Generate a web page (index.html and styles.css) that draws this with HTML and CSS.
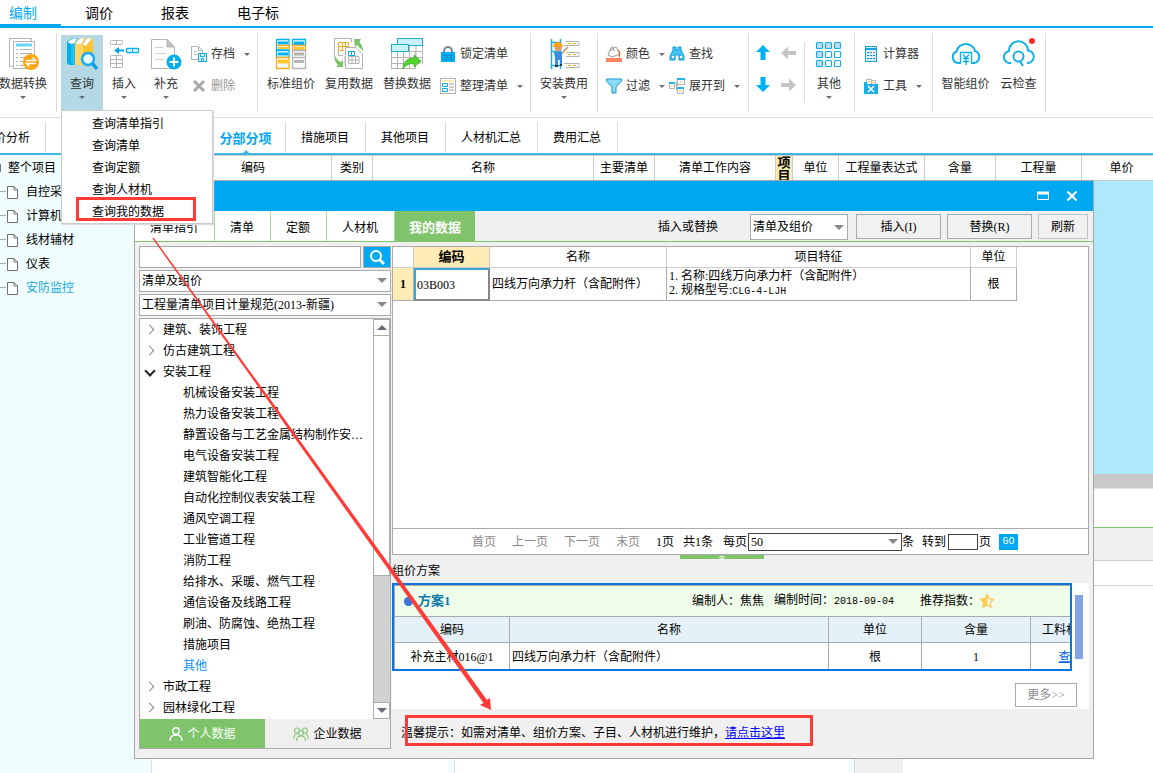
FILE: index.html
```html
<!DOCTYPE html>
<html lang="zh-CN">
<head>
<meta charset="utf-8">
<title>编制</title>
<link rel="stylesheet" href="styles.css">
</head>
<body>
<div class="app">
  <nav class="menubar">
    <a class="menubar-tab is-active" href="#">编制</a>
    <a class="menubar-tab" href="#">调价</a>
    <a class="menubar-tab" href="#">报表</a>
    <a class="menubar-tab" href="#">电子标</a>
  </nav>

  <header class="ribbon">
    <div class="group group-convert">
      <button class="tool tool-convert" type="button">
        <svg class="icon" viewBox="0 0 32 32"><path d="M2.500 28.500V.5H24.500V4" fill="none" stroke="#b4b4b4"/><path d="M2.500 28.500H6" stroke="#b4b4b4"/><rect x="6.500" y="3.500" width="21" height="27" fill="#fff" stroke="#b4b4b4"/><path d="M9 7H25" stroke="#6dd3f7" stroke-width="3"/><path d="M9 11.500H11M13 11.500H25M9 15.500H11M13 15.500H25M9 19.500H11M13 19.500H18M9 23.500H11M13 23.500H17M9 27.500H11M13 27.500H18" stroke="#b4b4b4"/><circle cx="24" cy="24" r="8" fill="#fba512"/><path d="M19 22.500H28.500L25.500 19.500M29 25.500H19.500L22.500 28.500" fill="none" stroke="#fff" stroke-width="1.500"/></svg>
        <span class="label">数据转换</span><i class="caret"></i>
      </button>
    </div>
    <div class="group group-edit">
      <button class="tool tool-narrow is-open" type="button">
        <svg class="icon" viewBox="0 0 32 32"><path d="M1 4L5 1V24L8 27H3L1 25Z" fill="#00b1ef"/><path d="M5 6H9V27H7L5 24Z" fill="#25bdf0"/><path d="M1 4L7 0H12L8 6H4Z" fill="#fff" stroke="#00a9e8" stroke-width=".7"/><path d="M9 7L17 4V27H9Z" fill="#fdd667"/><path d="M9 6L14 0H19L15 7Z" fill="#fff" stroke="#f7b62b" stroke-width=".7"/><path d="M17 7L27 1V26L17 28Z" fill="#fcc62f"/><path d="M16 7L21 0H27L20 8Z" fill="#fff" stroke="#f7b62b" stroke-width=".7"/><circle cx="22" cy="21" r="6" fill="#e8f8fe" stroke="#18adf0" stroke-width="2.500"/><path d="M26.500 25.500L31 31" stroke="#0f9ee4" stroke-width="3.500"/></svg>
        <span class="label">查询</span><i class="caret"></i>
      </button>
      <button class="tool tool-narrow" type="button">
        <svg class="icon" viewBox="0 0 32 32"><g fill="none" stroke="#b4b4b4"><rect x="2.500" y="2.500" width="12" height="4" rx="1"/><path d="M8.500 2.500V6.500"/><rect x="2.500" y="17.500" width="12" height="12" rx="1"/><path d="M8.500 17.500V29.500M2.500 21.500H14.500M2.500 25.500H14.500"/></g><rect x="18.500" y="10.500" width="12" height="4" rx="1" fill="none" stroke="#00b1ef" stroke-width="1.400"/><path d="M24.500 10V15" stroke="#00b1ef"/><path d="M6 12.500L11 9V11.500H16V13.500H11V16Z" fill="#00a8e8"/></svg>
        <span class="label">插入</span><i class="caret"></i>
      </button>
      <button class="tool tool-narrow" type="button">
        <svg class="icon" viewBox="0 0 32 32"><path d="M1.500 1.500H17L24.500 9V30.500H1.500Z" fill="#fff" stroke="#b4b4b4"/><path d="M17 1.500V9H24.500Z" fill="#c4c4c4" stroke="#b4b4b4"/><path d="M5 9.500H13M5 15.500H16M5 21.500H14" stroke="#d0d0d0"/><circle cx="24" cy="24" r="7.500" fill="#00aef0"/><path d="M24 19.500V28.500M19.500 24H28.500" stroke="#fff" stroke-width="2"/></svg>
        <span class="label">补充</span><i class="caret"></i>
      </button>
      <div class="stack">
        <button class="row" type="button"><svg class="mini" viewBox="0 0 16 16"><path d="M7 13.500H.5V.5H7.500L11.500 4.500V7" fill="#fff" stroke="#b4b4b4"/><path d="M7.500 .5V4.500H11.500M3 5.500H6M3 8.500H6" fill="none" stroke="#b4b4b4"/><rect x="7.500" y="7.500" width="8" height="8" fill="#dff5fc" stroke="#16aede"/><path d="M9.500 7.500V10.500H13.500V7.500M10.500 15.500V12.500H12.500V15.500" fill="none" stroke="#16aede"/></svg><span>存档</span><i class="caret"></i></button>
        <button class="row is-disabled" type="button"><svg class="mini" viewBox="0 0 16 16"><path d="M3 3L13 13M13 3L3 13" stroke="#a8a8a8" stroke-width="3"/></svg><span>删除</span></button>
      </div>
    </div>
    <div class="group group-list">
      <button class="tool" type="button">
        <svg class="icon" viewBox="0 0 32 32"><g fill="#fff" stroke-width="1.300"><path d="M1.500 12V1.500H14V12Z" stroke="#00b1ef"/><path d="M3 5H13" stroke="#00b1ef" stroke-width="3"/><path d="M1.500 7.500H14V12" stroke="#fbab20"/><path d="M3 10H13" stroke="#fcc62f" stroke-width="2"/><path d="M1.500 12.500H14V19.500H1.500Z" stroke="#00b1ef"/><path d="M3 16H13" stroke="#00b1ef" stroke-width="3"/><path d="M1.500 19.500H14V30.500H1.500Z" stroke="#fbab20"/><path d="M3 23.500H13" stroke="#fcc62f" stroke-width="4"/><path d="M17.500 7V1.500H30.500V7Z" stroke="#00b1ef"/><path d="M19 5H29" stroke="#00b1ef" stroke-width="3"/><path d="M17.500 7.500H30.500V12H17.500Z" stroke="#fbab20"/><path d="M19 10H29" stroke="#fcc62f" stroke-width="2"/><path d="M17.500 12.500H30.500V30.500H17.500ZM17.500 19.500H30.500" stroke="#b4b4b4"/><path d="M19 16H29M19 23.500H29" stroke="#b4b4b4" stroke-width="3"/></g></svg>
        <span class="label">标准组价</span>
      </button>
      <button class="tool" type="button">
        <svg class="icon" viewBox="0 0 32 32"><path d="M12 27.500V.5H1.500V17.500M1.500 .5H18.500V4" fill="none" stroke="#b4b4b4"/><rect x="2" y="1" width="16" height="17" fill="#fff"/><path d="M5.500 12.500V17.500H10M5.500 12.500H10" fill="none" stroke="#b4b4b4"/><path d="M5.500 4.500H15.500V9M5.500 4.500V12.500H11M5.500 8.500H15.500M9.500 4.500V12.500M12.500 4.500V9" fill="none" stroke="#fbab20"/><path d="M12.500 9.500H23L29.500 16V30.500H12.500Z" fill="#fff" stroke="#b4b4b4"/><path d="M15.500 13.500H21.500V17.500H15.500ZM18.500 13.500V17.500" fill="none" stroke="#00b1ef"/><path d="M15.500 18.500H26V25.500H15.500ZM15.500 22H26M19 18V25.500M22.500 17V25.500" fill="none" stroke="#b4b4b4"/><path d="M21 1H28L26.500 4C29 7 30 10 30 13L24 7L22 9Z" fill="#7bc268"/><path d="M1.500 17C3 20 5 23 8 24L10 22V29H3L5 27C2 24 1 21 1.500 17Z" fill="#7bc268"/></svg>
        <span class="label">复用数据</span>
      </button>
      <button class="tool" type="button">
        <svg class="icon" viewBox="0 0 32 32"><g fill="#fff" stroke="#b4b4b4"><rect x=".5" y="13.500" width="24" height="17"/><path d="M.5 19.500H31.500M.5 25.500H24M6.500 14V30.500M12.500 14V30.500M18.500 8V30.500M25 8V25H31.500V8M18.500 13.500H31.500"/></g><rect x="6.500" y=".5" width="25" height="7" fill="#c9f0fd" stroke="#1bb1d5"/><rect x=".5" y="6.500" width="17" height="7" fill="#c9f0fd" stroke="#1bb1d5"/><path d="M12 31C12 24 16 20 23 20V17L30 23L23 29V26C18 25 15 27 12 31Z" fill="#51d42e" stroke="#35aa20" stroke-width=".7"/></svg>
        <span class="label">替换数据</span>
      </button>
      <div class="stack">
        <button class="row" type="button"><svg class="mini" viewBox="0 0 16 16"><path d="M4 7V5A4 4 0 0 1 12 5V7" fill="none" stroke="#7b8792" stroke-width="2"/><rect x="1" y="6" width="14" height="10" fill="#00aef3"/><path d="M4 9.500H6M7 9.500H9M10 9.500H12M4 11.500H5M6 11.500H8M10 11.500H12M4 13.500H6M7 13.500H9M10 13.500H12" stroke="#067fba"/></svg><span>锁定清单</span></button>
        <button class="row" type="button"><svg class="mini" viewBox="0 0 16 16"><rect x=".5" y=".5" width="15" height="15" fill="#fff" stroke="#b4b4b4"/><path d="M2 3H14" stroke="#fde9b4" stroke-width="2"/><path d="M2.500 5.500H7.500V8.500H2.500ZM2.500 10.500H7.500V13.500H2.500Z" fill="#fff" stroke="#00b1ef"/><path d="M9 6H14M9 9H14M9 12H14" stroke="#ccc" stroke-width="2"/></svg><span>整理清单</span><i class="caret"></i></button>
      </div>
    </div>
    <div class="group group-install">
      <button class="tool" type="button">
        <svg class="icon" viewBox="0 0 32 32"><path d="M3.500 1V31M12.500 1V31M3 4.500H13M3 13.500H13M3 27.500H13" stroke="#18b1e0" stroke-width="1.500"/><g fill="#fff" stroke="#b4b4b4"><path d="M18 3.500H31V7.500H16M18 14.500H31V18.500H18M16 25.500H31V29.500H18"/></g><path d="M20 5.500H23M25 5.500H28M20 16.500H23M25 16.500H28M20 27.500H23M25 27.500H28" stroke="#fbab20"/><path d="M13 16L20 9" stroke="#c8a68a" stroke-width="2"/><path d="M6 14H14V27H12V22H10V28H7V20Z" fill="#3b8de0"/><circle cx="10" cy="10" r="3.500" fill="#d99f70"/><path d="M5 9A5 5 0 0 1 15 9Z" fill="#fba018"/><path d="M7 28H10M12 27H14" stroke="#333" stroke-width="2"/></svg>
        <span class="label">安装费用</span><i class="caret"></i>
      </button>
    </div>
    <div class="group group-filter">
      <div class="stack">
        <button class="row" type="button"><svg class="mini" viewBox="0 0 16 16"><path d="M4 4L10 1L14 8L6 11L2 9Z" fill="#fff" stroke="#999"/><path d="M5 5Q4 0 7 1L8 5" fill="none" stroke="#999"/><path d="M11 3Q15 4 14 11Q12 12 13 7Z" fill="#d2691e"/><path d="M0 14H16" stroke="#ff8260" stroke-width="4"/></svg><span>颜色</span><i class="caret"></i></button>
        <button class="row" type="button"><svg class="mini" viewBox="0 0 16 16"><path d="M.5 1H15.500V3L10 9V15H6V9L.5 3Z" fill="#8bdcf8" stroke="#159fd4"/></svg><span>过滤</span><i class="caret"></i></button>
      </div>
      <div class="stack">
        <button class="row" type="button"><svg class="mini" viewBox="0 0 16 16"><path d="M4 1H7V4H9V1H12V4L15 10V14H10V9H6V14H1V10L4 4Z" fill="#41c4f1" stroke="#119fd2"/><path d="M3 10H5V12H3ZM11 10H13V12H11Z" fill="#fff"/></svg><span>查找</span></button>
        <button class="row" type="button"><svg class="mini" viewBox="0 0 16 16"><path d="M5 7.500H9M7.500 3V12H10" fill="none" stroke="#b4b4b4"/><g fill="#fff" stroke="#b4b4b4"><rect x=".5" y="4.500" width="5" height="6"/><rect x="8.500" y=".5" width="7" height="6"/><rect x="8.500" y="9.500" width="6" height="6"/></g><path d="M0 5H6M8 1H16M8 10H15" stroke="#25b5e6" stroke-width="2"/><path d="M2 8H4M11 4H13M10 13H13" stroke="#fbc26a"/></svg><span>展开到</span><i class="caret"></i></button>
      </div>
    </div>
    <div class="group group-move">
      <button class="arrow" type="button" aria-label="上移"><svg viewBox="0 0 16 16"><path d="M8 0L15 7H10.500V15H5.500V7H1Z" fill="#00b1f5"/></svg></button>
      <button class="arrow" type="button" aria-label="左移"><svg viewBox="0 0 16 16"><path d="M0 8L7 1.500V6H15V10H7V14.500Z" fill="#c4c4c4"/></svg></button>
      <button class="arrow" type="button" aria-label="下移"><svg viewBox="0 0 16 16"><path d="M8 15L15 8H10.500V0H5.500V8H1Z" fill="#00b1f5"/></svg></button>
      <button class="arrow" type="button" aria-label="右移"><svg viewBox="0 0 16 16"><path d="M15 8L8 1.500V6H0V10H8V14.500Z" fill="#c4c4c4"/></svg></button>
    </div>
    <div class="group group-more">
      <button class="tool tool-narrow" type="button">
        <svg class="icon" viewBox="0 0 32 32"><g fill="#bfdcf3" stroke="#10b0e4" stroke-width="1.200"><rect x="3.500" y="4.500" width="6" height="6" rx="1"/><rect x="12.500" y="4.500" width="6" height="6" rx="1"/><rect x="21.500" y="4.500" width="6" height="6" rx="1"/><rect x="3.500" y="13.500" width="6" height="6" rx="1"/><rect x="12.500" y="13.500" width="6" height="6" rx="1" fill="#fff"/><rect x="21.500" y="13.500" width="6" height="6" rx="1" fill="#fff"/><rect x="3.500" y="22.500" width="6" height="6" rx="1"/><rect x="12.500" y="22.500" width="6" height="6" rx="1" fill="#fff"/><rect x="21.500" y="22.500" width="6" height="6" rx="1" fill="#fff"/></g></svg>
        <span class="label">其他</span><i class="caret"></i>
      </button>
    </div>
    <div class="group group-utils">
      <div class="stack">
        <button class="row" type="button"><svg class="mini" viewBox="0 0 16 16"><rect x="2.500" y=".5" width="11" height="15" fill="#d9f2fc" stroke="#149fd0"/><path d="M3 3H13" stroke="#14a9e0" stroke-width="2"/><path d="M4 6.500H6M7 6.500H9M4 9.500H6M7 9.500H9M10 9.500H12M4 12.500H6M7 12.500H9M10 12.500H12" stroke="#1a86c8"/><path d="M10 6.500H12" stroke="#f66"/></svg><span>计算器</span></button>
        <button class="row" type="button"><svg class="mini" viewBox="0 0 16 16"><path d="M3.500 6V1.500H8.500V6M8.500 2.500H12.500V6" fill="#fff" stroke="#b4b4b4"/><path d="M5 3.500H7M9 4.500H11" stroke="#fbb11f"/><path d="M1 4H4V6H15V16H1Z" fill="#1cade8"/><path d="M5 8L11 14M11 8L5 14" stroke="#fff" stroke-width="1.500"/></svg><span>工具</span><i class="caret"></i></button>
      </div>
    </div>
    <div class="group group-cloud">
      <button class="tool tool-cloud" type="button">
        <svg class="icon" viewBox="0 0 32 32"><path d="M10.500 25H8A6 6 0 0 1 6.500 13.500A9.500 9.500 0 0 1 25 13A6.200 6.200 0 0 1 24 25H21.500" fill="none" stroke="#10b0e8" stroke-width="2"/><path d="M10.500 25.500V14.500H21.500V25.500M13 16.500L16 20L19 16.500M13 20.500H19M13 23.500H19M16 20V27" fill="none" stroke="#10b0e8" stroke-width="1.400"/></svg>
        <span class="label">智能组价</span>
      </button>
      <button class="tool tool-cloud" type="button">
        <svg class="icon" viewBox="0 0 32 32"><path d="M8 25A6 6 0 0 1 6 13A9.500 9.500 0 0 1 25 12.500A6.200 6.200 0 0 1 24 25" fill="none" stroke="#10b0e8" stroke-width="2"/><circle cx="15.500" cy="18.500" r="5" fill="none" stroke="#10b0e8" stroke-width="2"/><path d="M17 23L20 28" stroke="#10b0e8" stroke-width="2"/><circle cx="29" cy="3" r="3" fill="#fb2e31"/></svg>
        <span class="label">云检查</span>
      </button>
    </div>
  </header>

  <nav class="subtabs">
    <a class="subtab subtab-first" href="#">造价分析</a>
    <span class="subtab-space"></span>
    <a class="subtab is-active" href="#">分部分项</a>
    <a class="subtab" href="#">措施项目</a>
    <a class="subtab" href="#">其他项目</a>
    <a class="subtab" href="#">人材机汇总</a>
    <a class="subtab" href="#">费用汇总</a>
  </nav>

  <div class="workspace">
    <aside class="projects">
      <ul class="project-list">
        <li class="project-root">整个项目</li>
        <li class="project"><svg class="doc" viewBox="0 0 11 13"><path d="M.5 .5H7L10.500 4V12.500H.5ZM7 .5V4H10.500" fill="#fff" stroke="#707070"/></svg>自控采</li>
        <li class="project"><svg class="doc" viewBox="0 0 11 13"><path d="M.5 .5H7L10.500 4V12.500H.5ZM7 .5V4H10.500" fill="#fff" stroke="#707070"/></svg>计算机</li>
        <li class="project"><svg class="doc" viewBox="0 0 11 13"><path d="M.5 .5H7L10.500 4V12.500H.5ZM7 .5V4H10.500" fill="#fff" stroke="#707070"/></svg>线材辅材</li>
        <li class="project"><svg class="doc" viewBox="0 0 11 13"><path d="M.5 .5H7L10.500 4V12.500H.5ZM7 .5V4H10.500" fill="#fff" stroke="#707070"/></svg>仪表</li>
        <li class="project is-active"><svg class="doc" viewBox="0 0 11 13"><path d="M.5 .5H7L10.500 4V12.500H.5ZM7 .5V4H10.500" fill="#fff" stroke="#707070"/></svg>安防监控</li>
      </ul>
    </aside>
    <main class="sheet">
      <table class="sheet-head">
        <colgroup><col class="w-index"><col class="w-code"><col class="w-kind"><col class="w-name"><col class="w-main"><col class="w-work"><col class="w-item"><col class="w-unit"><col class="w-expr"><col class="w-content"><col class="w-qty"><col></colgroup>
        <thead><tr><th></th><th>编码</th><th>类别</th><th>名称</th><th>主要清单</th><th>清单工作内容</th><th class="th-item"><div class="item-text">项<br>目</div></th><th>单位</th><th>工程量表达式</th><th>含量</th><th>工程量</th><th>单价</th></tr></thead>
      </table>
      <div class="sheet-rows"></div>
      <div class="sheet-scroll"></div>
      <div class="detail-gap"></div>
      <div class="detail-tabs"></div>
      <div class="detail-head"></div>
      <div class="detail-body">
        <div class="detail-col"></div><div class="detail-col"></div><div class="detail-side"></div><div></div>
      </div>
    </main>
  </div>

  <section class="dialog" role="dialog" aria-label="查询">
    <div class="titlebar">
      <button class="win-btn" type="button" aria-label="还原"><svg viewBox="0 0 12 10"><path d="M.5 1V8.500H11.500V1" fill="none" stroke="#fff"/><path d="M0 2H12" stroke="#fff" stroke-width="3"/></svg></button>
      <button class="win-btn" type="button" aria-label="关闭"><svg viewBox="0 0 12 10"><path d="M1.500 .5L10.500 9.500M10.500 .5L1.500 9.500" stroke="#fff" stroke-width="2.200"/></svg></button>
    </div>
    <div class="toolbar">
      <button class="dtab" type="button">清单指引</button>
      <button class="dtab" type="button">清单</button>
      <button class="dtab" type="button">定额</button>
      <button class="dtab" type="button">人材机</button>
      <button class="dtab is-active" type="button">我的数据</button>
      <div class="actions">
        <label class="actions-label" for="mode">插入或替换</label>
        <span class="select select-mode"><select id="mode"><option>清单及组价</option></select></span>
        <button class="btn" type="button">插入(I)</button>
        <button class="btn" type="button">替换(R)</button>
        <button class="btn btn-refresh" type="button">刷新</button>
      </div>
    </div>

    <div class="content">
      <div class="left">
        <div class="search">
          <input class="search-input" type="text" aria-label="搜索">
          <button class="search-btn" type="button" aria-label="查找"><svg viewBox="0 0 16 16"><circle cx="7" cy="7" r="5" fill="none" stroke="#fff" stroke-width="2.200"/><path d="M10.500 10.500L15 15" stroke="#fff" stroke-width="2.800"/></svg></button>
        </div>
        <span class="select"><select aria-label="类型"><option>清单及组价</option></select></span>
        <span class="select"><select aria-label="规范"><option>工程量清单项目计量规范(2013-新疆)</option></select></span>
        <div class="catalog">
          <div class="catalog-main">
            <ul class="tree">
              <li class="node">建筑、装饰工程</li>
              <li class="node">仿古建筑工程</li>
              <li class="node is-expanded">安装工程</li>
              <li class="leaf">机械设备安装工程</li>
              <li class="leaf">热力设备安装工程</li>
              <li class="leaf">静置设备与工艺金属结构制作安…</li>
              <li class="leaf">电气设备安装工程</li>
              <li class="leaf">建筑智能化工程</li>
              <li class="leaf">自动化控制仪表安装工程</li>
              <li class="leaf">通风空调工程</li>
              <li class="leaf">工业管道工程</li>
              <li class="leaf">消防工程</li>
              <li class="leaf">给排水、采暖、燃气工程</li>
              <li class="leaf">通信设备及线路工程</li>
              <li class="leaf">刷油、防腐蚀、绝热工程</li>
              <li class="leaf">措施项目</li>
              <li class="leaf is-active">其他</li>
              <li class="node">市政工程</li>
              <li class="node">园林绿化工程</li>
            </ul>
            <div class="scrollbar"><span class="scroll-end scroll-up"></span><span class="scroll-thumb"></span><span class="scroll-track"></span><span class="scroll-end scroll-down"></span></div>
          </div>
          <div class="owner">
            <button class="owner-tab is-active" type="button"><svg class="person" viewBox="0 0 14 14"><circle cx="7" cy="4" r="3.200" fill="none" stroke="#fff" stroke-width="1.400"/><path d="M1 14Q1 8 7 8Q13 8 13 14" fill="none" stroke="#fff" stroke-width="1.400"/></svg>个人数据</button>
            <button class="owner-tab" type="button"><svg class="people" viewBox="0 0 16 14"><g fill="none" stroke="#8bc77b" stroke-width="1.200"><circle cx="4" cy="3.500" r="2.500"/><circle cx="12" cy="3.500" r="2.500"/><circle cx="8" cy="6" r="2.500"/><path d="M.7 12Q.7 7 4 7M15.300 12Q15.300 7 12 7M3.500 14Q3.500 9 8 9Q12.500 9 12.500 14"/></g></svg>企业数据</button>
          </div>
        </div>
      </div>

      <div class="right">
        <div class="results">
          <table class="grid">
            <colgroup><col class="g-index"><col class="g-code"><col class="g-name"><col class="g-desc"><col class="g-unit"></colgroup>
            <thead><tr><th></th><th class="is-key">编码</th><th>名称</th><th>项目特征</th><th>单位</th></tr></thead>
            <tbody><tr><td class="is-key">1</td><td class="is-focus">03B003</td><td>四线万向承力杆（含配附件）</td><td class="desc">1. 名称:四线万向承力杆（含配附件）<br>2. 规格型号:<span class="mono">CLG-4-LJH</span></td><td class="center">根</td></tr></tbody>
          </table>
          <div class="pager">
            <div class="pager-links"><button class="page-link" type="button">首页</button><button class="page-link" type="button">上一页</button><button class="page-link" type="button">下一页</button><button class="page-link" type="button">末页</button></div>
            <span>1页</span><span class="total">共1条</span>
            <label for="size">每页</label><span class="select select-size"><select id="size"><option>50</option></select></span><span>条</span>
            <label class="goto" for="page">转到</label><input class="page-input" id="page" type="text"><span>页</span>
            <button class="go" type="button">GO</button>
          </div>
        </div>
        <div class="splitter"><svg viewBox="0 0 8 4"><path d="M1 2L4 4L7 2M2 1L4 2L6 1" fill="none" stroke="#fff"/></svg></div>
        <div class="plans-title">组价方案</div>
        <div class="plans">
          <div class="plans-row">
            <div class="plan">
              <div class="plan-head">
                <span class="dot"></span><strong class="plan-name">方案1</strong>
                <span class="author">编制人：焦焦</span><span class="time">编制时间：<span class="mono">2018-09-04</span></span><span class="rating">推荐指数：</span>
                <svg class="star" viewBox="0 0 14 14"><path d="M7 .7L9 4.700L13.400 5.300L10.200 8.400L11 13L7 10.800L3 13L3.800 8.400L.6 5.300L5 4.700Z" fill="#fff" stroke="#fbc85a" stroke-width="1.400"/><path d="M7.500 .7V10.800L3 13L3.800 8.400L.6 5.300L5 4.700Z" fill="#fdcb4d"/></svg>
              </div>
              <table class="plan-grid">
                <colgroup><col class="p-code"><col class="p-name"><col class="p-unit"><col class="p-qty"><col class="p-more"></colgroup>
                <thead><tr><th>编码</th><th>名称</th><th>单位</th><th>含量</th><th>工料机</th></tr></thead>
                <tbody><tr><td>补充主材016@1</td><td class="plan-item">四线万向承力杆（含配附件）</td><td>根</td><td>1</td><td><a class="view" href="#">查看</a></td></tr></tbody>
              </table>
            </div>
            <div class="plan-scroll"></div>
          </div>
          <button class="more" type="button">更多&gt;&gt;</button>
        </div>
        <p class="hint">温馨提示：如需对清单、组价方案、子目、人材机进行维护，<a class="hint-link" href="#">请点击这里</a></p>
      </div>
    </div>
  </section>

  <ul class="dropdown">
    <li><a href="#">查询清单指引</a></li>
    <li><a href="#">查询清单</a></li>
    <li><a href="#">查询定额</a></li>
    <li><a href="#">查询人材机</a></li>
    <li><a href="#">查询我的数据</a></li>
  </ul>

  <svg class="markup" width="820" height="760" viewBox="0 0 820 760"><g fill="none" stroke="#ff3b38" stroke-width="3"><path d="M77.500 198.500H194.500V219.500H77.500Z"/><path d="M406.500 716.500H811.500V744.500H406.500Z"/></g><path d="M152.500 238.500L153.500 237.500L487 700L490 698L491 710L480 705L483.500 703Z" fill="#ff3b38"/></svg>
</div>
</body>
</html>
```

FILE: styles.css
```css
* { box-sizing: border-box; }

body {
  margin: 0;
  background: #fff;
  color: #000;
  font: 12px/16px "Liberation Serif", "Noto Sans CJK SC", sans-serif;
}

button, select, input { font: inherit; color: inherit; margin: 0; padding: 0; border: 0; border-radius: 0; background: none; white-space: nowrap; }
a { color: inherit; text-decoration: none; }
ul { list-style: none; margin: 0; padding: 0; }
table { border-collapse: separate; border-spacing: 0; table-layout: fixed; }
th { font-weight: 400; padding: 0; }
td { padding: 0; }
svg { display: block; flex: none; }

.app { position: relative; min-height: 100vh; display: flex; flex-direction: column; overflow: hidden; }

/* top menu */
.menubar { display: flex; height: 28px; border-bottom: 2px solid #00a8f3; font-size: 14px; line-height: 28px; }
.menubar-tab { padding: 0 24px; }
.menubar-tab:first-child { padding-left: 9px; }
.menubar-tab.is-active { color: #00a8f3; border-bottom: 2px solid #00a8f3; height: 26px; }

/* ribbon */
.ribbon { display: flex; height: 90px; padding-top: 5px; border-bottom: 1px solid #ddd; color: #333; }
.group { flex: none; display: flex; height: 79px; border-right: 1px solid #ddd; }
.group-convert { width: 57px; }
.group-edit { width: 201px; padding-left: 4px; }
.group-list { width: 273px; padding-left: 4px; }
.group-install { width: 67px; padding-left: 4px; }
.group-filter { width: 151px; padding-left: 4px; }
.group-move { width: 56px; height: 61px; margin-top: 9px; padding: 3px 0 0 6px; display: grid; grid-template-columns: 26px 24px; grid-template-rows: 32px 24px; }
.group-more { width: 50px; padding-left: 3px; }
.group-utils { width: 78px; padding-left: 4px; }
.group-cloud { width: 113px; padding-left: 6px; }

.tool { flex: none; width: 58px; height: 76px; margin-top: 2px; padding-top: 3px; display: flex; flex-direction: column; align-items: center; justify-content: flex-start; }
.tool-convert { width: 46px; }
.tool-narrow { width: 42px; }
.tool-cloud { width: 53px; }
.tool.is-open { background: #b4d9e4; }
.icon { width: 32px; height: 32px; }
.label { margin-top: 6px; }
.caret { width: 0; height: 0; border: 3px solid transparent; border-top-color: #6b7078; border-bottom: 0; }
.tool .caret { margin-top: 4px; }
.stack { margin-top: 5px; padding-left: 4px; flex: none; }
.row { display: flex; align-items: center; height: 32px; gap: 4px; }
.row .caret { margin-left: 5px; }
.row.is-disabled { color: #999; }
.mini { width: 16px; height: 16px; }
.arrow svg { width: 16px; height: 16px; }
.arrow { display: flex; }

/* sheet tabs */
.subtabs { display: flex; height: 37px; padding-top: 4px; border-bottom: 2px solid #41b6e6; }
.subtab { height: 31px; padding: 0 16px 0 15px; line-height: 33px; border-right: 1px solid #ddd; white-space: nowrap; }
.subtab-first { width: 46px; display: flex; justify-content: flex-end; padding: 0 15px 0 0; }
.subtab-space { width: 160px; }
.subtab.is-active { position: relative; width: 80px; padding: 0; text-align: center; color: #00a8f3; font-size: 13px; font-weight: 700; }
.subtab.is-active::after { content: ""; position: absolute; left: 36px; bottom: -1px; border: 4px solid transparent; border-bottom-color: #41b6e6; border-top: 0; }

/* workspace behind the dialog */
.workspace { flex: 1; display: flex; }
.projects { width: 152px; flex: none; background: #f0fdff; border-right: 1px solid #ddd; padding-top: 1px; line-height: 24px; }
.project-root { padding-left: 8px; background: linear-gradient(#777, #777) 0 8px / 1px 8px no-repeat; }
.project { display: flex; align-items: center; gap: 8px; padding-left: 7px; background: linear-gradient(#aaa, #aaa) 0 11px / 6px 1px no-repeat; }
.project.is-active { color: #18a8e0; }
.doc { width: 11px; height: 13px; }
.sheet { flex: 1; min-width: 0; display: flex; flex-direction: column; }
.sheet-head { width: 100%; border-top: 1px solid #ccc; }
.sheet-head th { height: 25px; border-right: 1px solid #ccc; border-bottom: 1px solid #ccc; white-space: nowrap; }
.sheet-head th:last-child { padding-left: 8px; border-right: 0; }
.sheet-head .th-item { background: #ffecb5; }
.item-text { height: 24px; overflow: hidden; font-size: 13px; line-height: 13px; font-weight: 700; }
.w-index { width: 23px; } .w-code { width: 157px; } .w-kind { width: 41px; } .w-name { width: 221px; }
.w-main { width: 61px; } .w-work { width: 121px; } .w-item { width: 17px; } .w-unit { width: 46px; }
.w-expr { width: 86px; } .w-content { width: 71px; } .w-qty { width: 86px; }
.sheet-rows { height: 293px; background: #aee9fb; }
.sheet-scroll { height: 15px; background: #c9c9c9; border-bottom: 1px solid #e0e0e0; }
.detail-gap { height: 39px; border-bottom: 1px solid #7fc36d; }
.detail-tabs { height: 33px; background: #efefef; border-bottom: 1px solid #d0d0d0; }
.detail-head { height: 25px; border-bottom: 1px solid #d0d0d0; }
.detail-body { flex: 1; display: grid; grid-template-columns: 303px 400px 48px 1fr; }
.detail-col { border-right: 1px solid #ddd; box-shadow: inset -5px 0 #f0fdff; }
.detail-side { background: #efefef; }

/* dialog */
.dialog { position: absolute; left: 134px; top: 180px; width: 960px; display: flex; flex-direction: column; background: #f0f0f0; border: 1px solid #a8a8a8; }
.titlebar { height: 30px; background: #00a8f3; display: flex; justify-content: flex-end; align-items: center; gap: 17px; padding-right: 15px; }
.win-btn { display: flex; }
.win-btn svg { width: 12px; height: 10px; }
.toolbar { display: flex; height: 31px; border-bottom: 1px solid #7fc36d; }
.dtab { background: #fff; padding: 3px 16px 0 15px; border-right: 1px solid #a9dd95; }
.dtab.is-active { background: #7fc46b; color: #fff; font-size: 13px; font-weight: 700; padding: 3px 14px 0; border: 0; }
.actions { flex: 1; display: flex; justify-content: flex-end; padding: 3px 5px 1px 0; gap: 6px; }
.actions-label { line-height: 26px; margin-right: 26px; }
.select { position: relative; display: flex; background: #fff; border: 1px solid #aaa; height: 22px; }
.select select { appearance: none; width: 100%; padding-left: 2px; }
.select::after { content: ""; position: absolute; right: 3px; top: 7px; border: 5px solid transparent; border-top-color: #888; border-bottom: 0; pointer-events: none; }
.select-mode { width: 98px; height: 26px; margin-right: 2px; }
.select-mode::after { top: 10px; }
.btn { width: 85px; height: 25px; border: 1px solid #aaa; background: #f1f1f1; text-align: center; }
.btn-refresh { width: 50px; border-color: #c4c4c4; }

.content { display: flex; padding: 4px 4px 9px; }
.left { flex: none; width: 252px; display: flex; flex-direction: column; gap: 2px; }
.search { display: flex; justify-content: space-between; height: 22px; }
.search-input { width: 222px; border: 1px solid #aaa; background: #fff; }
.search-btn { width: 28px; display: flex; align-items: center; justify-content: center; background: #00a8f3; border: 1px solid #aaa; }
.search-btn svg { width: 16px; height: 16px; }
.catalog { border: 1px solid #aaa; background: #fff; flex: 1; }
.catalog-main { display: flex; }
.tree { flex: 1; line-height: 21px; padding-top: 1px; white-space: nowrap; }
.node { padding-left: 23px; position: relative; }
.node::before { content: ""; position: absolute; left: 6px; top: 6px; width: 6px; height: 6px; border: solid #888; border-width: 1px 1px 0 0; transform: rotate(45deg); }
.node.is-expanded::before { top: 5px; border-color: #222; border-width: 0 2px 2px 0; }
.leaf { padding-left: 43px; }
.leaf.is-active { color: #0a8ff5; }
.scrollbar { width: 17px; display: flex; flex-direction: column; }
.scroll-end { height: 17px; border: 1px solid #aaa; display: flex; align-items: center; justify-content: center; }
.scroll-end::after { content: ""; border: 5px solid transparent; }
.scroll-up::after { border-bottom-color: #666b78; border-top: 0; }
.scroll-down::after { border-top-color: #666b78; border-bottom: 0; }
.scroll-thumb { height: 240px; border: 1px solid #aaa; border-top: 0; }
.scroll-track { flex: 1; background: #d1d1d1; border-left: 1px solid #aaa; }
.owner { display: flex; height: 29px; }
.owner-tab { flex: 1; display: flex; align-items: center; justify-content: center; gap: 4px; background: #efefef; }
.owner-tab.is-active { background: #7fc46b; color: #fff; }
.person { width: 14px; height: 14px; }
.people { width: 16px; height: 14px; }

.right { flex: 1; min-width: 0; margin-left: 1px; }
.results { height: 309px; display: flex; flex-direction: column; justify-content: space-between; background: #fff; border: 1px solid #aaa; }
.grid { width: 624px; }
.grid th { height: 21px; border-right: 1px solid #ccc; border-bottom: 1px solid #ccc; }
.grid td { height: 33px; border-right: 1px solid #aaa; border-bottom: 1px solid #aaa; padding-left: 2px; }
.grid .is-key { background: #ffecb5; font-weight: 700; text-align: center; padding: 0; }
.grid th.is-key { font-size: 13px; }
.grid .is-focus { border: 2px solid #888; border-top-color: #3aa7d8; border-left-color: #3aa7d8; padding-left: 1px; }
.grid .desc { line-height: 14px; }
.grid .center { text-align: center; padding: 0; }
.g-index { width: 21px; } .g-code { width: 76px; } .g-name { width: 177px; } .g-desc { width: 304px; } .g-unit { width: 46px; }
.mono { font-family: "Liberation Mono", monospace; font-size: 10px; }
.pager { display: flex; align-items: center; height: 26px; padding: 0 70px 0 79px; border-top: 1px solid #aaa; }
.pager-links { display: flex; justify-content: space-between; width: 168px; margin-right: 16px; color: #888; }
.total { margin: 0 10px 0 9px; }
.select-size { width: 154px; height: 18px; margin-left: 1px; border-color: #444; }
.select-size::after { top: 5px; }
.goto { margin-left: 8px; }
.page-input { width: 30px; height: 16px; margin: 0 1px 0 2px; border: 1px solid #444; }
.go { width: 19px; height: 16px; margin-left: auto; background: #00a8f3; color: #fff; font: 10px/16px "Liberation Mono", monospace; }
.splitter { width: 84px; height: 4px; margin-left: 288px; background: #7fc46b; display: flex; justify-content: center; }
.splitter svg { width: 8px; height: 4px; }
.plans-title { line-height: 24px; }
.plans { height: 126px; background: #fff; display: flex; flex-direction: column; }
.plans-row { display: flex; gap: 3px; }
.plan { flex: none; width: 680px; height: 88px; overflow: hidden; border: 2px solid #0c74da; }
.plan-head { display: flex; align-items: center; height: 31px; background: #effcea; border-left: 1px solid #aaa; border-top: 1px solid #aaa; padding-left: 9px; }
.dot { width: 9px; height: 9px; border-radius: 50%; background: #3575e0; }
.plan-name { margin-left: 5px; color: #0c7ba5; font-size: 13px; }
.author { margin-left: auto; }
.time { margin: 0 26px 0 10px; }
.star { width: 14px; height: 14px; margin: 0 76px 0 0; }
.plan-grid { width: 716px; border-left: 1px solid #aaa; text-align: center; }
.plan-grid th { height: 27px; background: #e4f1f8; border: solid #aaa; border-width: 1px 1px 1px 0; }
.plan-grid td { height: 27px; border-right: 1px solid #aaa; }
.plan-grid .plan-item { text-align: left; padding-left: 2px; }
.p-code { width: 115px; } .p-name { width: 319px; } .p-unit { width: 93px; } .p-qty { width: 109px; } .p-more { width: 80px; }
.plan-grid th:last-child { text-align: left; padding-left: 11px; }
.view { color: #0a64e8; text-decoration: underline; }
.plan-scroll { width: 8px; height: 64px; margin-top: 12px; background: #7fa5e3; }
.more { align-self: flex-end; width: 62px; height: 24px; margin: 12px 12px 0 0; border: 1px solid #aaa; color: #888; }
.hint { margin: 0; padding: 16px 0 0 9px; }
.hint-link { color: #00f; text-decoration: underline; }

/* open menu */
.dropdown { position: absolute; left: 61px; top: 110px; width: 152px; height: 114px; padding-top: 2px; background: #fff; border: 1px solid #ccc; line-height: 22px; box-shadow: 1px 1px 1px #ddd; }
.dropdown a { display: block; padding-left: 30px; }

.markup { position: absolute; left: 0; top: 0; pointer-events: none; }
```
